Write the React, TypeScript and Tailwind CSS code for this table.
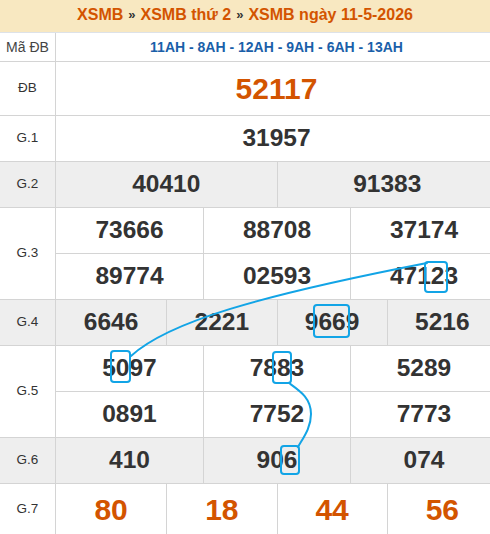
import React from 'react'

const ROWS: { label: string; nums: string[][]; gray?: boolean; big?: boolean; h: string }[] = [
  { label: 'ĐB', nums: [['52117']], big: true, h: 'h-[54px]' },
  { label: 'G.1', nums: [['31957']], h: 'h-[46px]' },
  { label: 'G.2', nums: [['40410', '91383']], gray: true, h: 'h-[46px]' },
  { label: 'G.3', nums: [['73666', '88708', '37174'], ['89774', '02593', '47123']], h: 'h-[46px]' },
  { label: 'G.4', nums: [['6646', '2221', '9669', '5216']], gray: true, h: 'h-[46px]' },
  { label: 'G.5', nums: [['5097', '7883', '5289'], ['0891', '7752', '7773']], h: 'h-[46px]' },
  { label: 'G.6', nums: [['410', '906', '074']], gray: true, h: 'h-[46px]' },
  { label: 'G.7', nums: [['80', '18', '44', '56']], big: true, h: 'h-[51px]' },
]

const gridCols: Record<number, string> = {
  1: 'grid-cols-1',
  2: 'grid-cols-2',
  3: 'grid-cols-3',
  4: 'grid-cols-4',
}

function PrizeRow({ row }: { row: (typeof ROWS)[number] }) {
  const bg = row.gray ? 'bg-[#eeeeee]' : 'bg-white'
  return (
    <div className={`flex ${bg}`}>
      <div className="w-[56px] shrink-0 border-r border-b border-[#d4d4d4] flex items-center justify-center text-[13.5px] text-[#333]">
        {row.label}
      </div>
      <div className="flex-1 flex flex-col">
        {row.nums.map((line, i) => (
          <div key={i} className={`grid ${gridCols[line.length]} ${row.h} border-b border-[#d4d4d4]`}>
            {line.map((n, j) => (
              <div
                key={j}
                className={`flex items-center justify-center font-bold ${j > 0 ? 'border-l border-[#d4d4d4]' : ''} ${
                  row.big ? 'text-[30px] text-[#d35400]' : 'text-[24.5px] text-[#333]'
                }`}
              >
                {n}
              </div>
            ))}
          </div>
        ))}
      </div>
    </div>
  )
}

export default function App() {
  return (
    <div className="relative w-[490px] h-[534px] overflow-hidden bg-white font-['Liberation_Sans',Arial,sans-serif]">
      {/* tiêu đề */}
      <div className="w-[490px] h-[33px] bg-[#f8e8c1] border-b border-[#dde2e8] flex items-center justify-center pb-[3px] text-[16px] font-bold">
        <span className="text-[#d35400]">XSMB</span>
        <span className="text-[#333] text-[13px] mx-[5px]">»</span>
        <span className="text-[#d35400]">XSMB thứ 2</span>
        <span className="text-[#333] text-[13px] mx-[5px]">»</span>
        <span className="text-[#d35400]">XSMB ngày 11-5-2026</span>
      </div>

      <div className="w-[497px]">
        {/* mã đặc biệt */}
        <div className="flex h-[29px]">
          <div className="w-[56px] shrink-0 border-r border-b border-[#d4d4d4] flex items-center justify-center text-[14px] text-[#444]">
            Mã ĐB
          </div>
          <div className="flex-1 border-b border-[#d4d4d4] flex items-center justify-center text-[14px] font-bold text-[#1a5fa9]">
            11AH - 8AH - 12AH - 9AH - 6AH - 13AH
          </div>
        </div>
        {ROWS.map((r) => (
          <PrizeRow key={r.label} row={r} />
        ))}
      </div>

      {/* ghi chú cầu lô */}
      <svg className="absolute inset-0 pointer-events-none" width="490" height="534" viewBox="0 0 490 534" fill="none">
        <g stroke="#12a4e6" strokeWidth="2" strokeLinecap="round">
          <rect x="425" y="262" width="22" height="30" rx="3" />
          <rect x="314" y="305" width="35" height="32" rx="3" />
          <rect x="111" y="351" width="19" height="31" rx="3" />
          <rect x="273" y="352" width="18" height="31" rx="3" />
          <rect x="281" y="446" width="18" height="28" rx="3" />
          <path d="M131 356 C 168 322, 258 296, 427 263" />
          <path d="M289 383 C 300 391, 311 398, 311 414 C 311 428, 303 438, 298 447" />
        </g>
      </svg>
    </div>
  )
}
